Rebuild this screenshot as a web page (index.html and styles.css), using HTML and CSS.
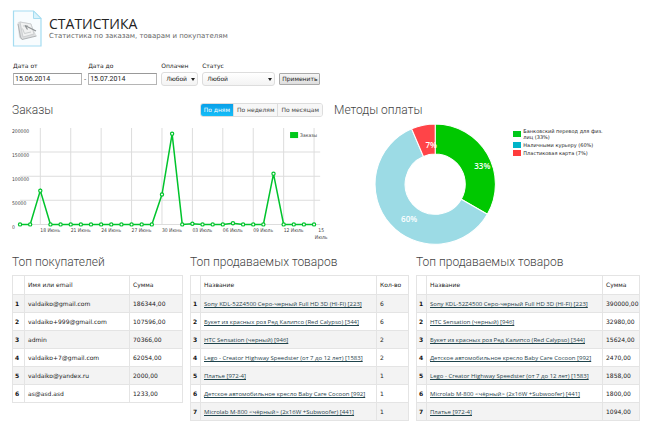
FILE: index.html
```html
<!DOCTYPE html>
<html lang="ru">
<head>
  <meta charset="UTF-8" />
  <meta name="viewport" content="width=device-width, initial-scale=1.0"/>
  <title>Статистика</title>
  <link rel="stylesheet" href="styles.css">
</head>
<body>
  <div class="container">
    <header class="header">
      <svg class="header-icon" width="30" height="37" viewBox="0 0 30 37" aria-hidden="true">
        <path d="M1.500 1H21.500L29 8.500V36H1.500Z" fill="#f8fcfe" stroke="#a5dcf1" stroke-width="1.200"/>
        <path d="M21.500 1V8.500H29Z" fill="#d9f2fb" stroke="#a5dcf1"/>
        <path d="M5.500 13Q6 11.500 8 11.500L19 13.500L24.500 26L10 29.500Q8 29 7 27Z" fill="#dcdedf"/>
        <path d="M8 12L19 14L22 24L11 27Z" fill="#f0f1f1" stroke="#c5c8ca" stroke-width="0.800"/>
        <path d="M6 14L8.500 27L10 29.500L24.500 26" fill="none" stroke="#a9adaf" stroke-width="0.900"/>
        <path d="M11 16L16 15.500M10.500 18.500L12.500 23.500L19 22" fill="none" stroke="#c4c7c8" stroke-width="0.900"/>
        <path d="M13 15.500L24 21M13 15.500L15.500 19.500" fill="none" stroke="#8f9395" stroke-width="1.200"/>
      </svg>
      <div>
        <h1>СТАТИСТИКА</h1>
        <p>Статистика по заказам, товарам и покупателям</p>
      </div>
    </header>

    <!-- Фильтр -->
    <form class="filter">
      <div class="field field-date">
        <label for="dateFrom">Дата от</label>
        <input type="text" id="dateFrom" value="15.06.2014" />
      </div>
      <span class="dash">-</span>
      <div class="field field-date">
        <label for="dateTo">Дата до</label>
        <input type="text" id="dateTo" value="15.07.2014" />
      </div>
      <div class="field field-paid">
        <label for="paid">Оплачен</label>
        <div class="select"><select id="paid"><option>Любой</option></select></div>
      </div>
      <div class="field field-status">
        <label for="status">Статус</label>
        <div class="select"><select id="status"><option>Любой</option></select></div>
      </div>
      <button type="button" class="apply">Применить</button>
    </form>

    <!-- Графики -->
    <div class="charts">
      <section>
        <div class="section-head">
          <h2>Заказы</h2>
          <div class="tabs">
            <button type="button" class="active">По дням</button>
            <button type="button">По неделям</button>
            <button type="button">По месяцам</button>
          </div>
        </div>
        <svg class="line-chart" viewBox="0 0 316 122" role="img" aria-label="Заказы">
          <g id="grid" class="grid"></g>
          <g id="axis" class="axis"></g>
          <rect x="277" y="8" width="8" height="6" fill="#00c81a"/>
          <text class="axis" x="287" y="13">Заказы</text>
          <polyline id="line" class="line"/>
          <g id="dots" class="dots"></g>
        </svg>
      </section>

      <section>
        <div class="section-head">
          <h2>Методы оплаты</h2>
        </div>
        <div class="payments">
          <svg class="donut" viewBox="-61 -61 122 122" role="img" aria-label="Методы оплаты">
            <path d="M0 -60A60 60 0 0 1 52 30L26 15A30 30 0 0 0 0 -30Z" fill="#00c800"/>
            <path d="M52 30A60 60 0 1 1 -23.500 -55.200L-11.700 -27.600A30 30 0 1 0 26 15Z" fill="#9cdbe5"/>
            <path d="M-23.500 -55.200A60 60 0 0 1 0 -60V-30A30 30 0 0 0 -11.700 -27.600Z" fill="#ff4448"/>
            <text x="47" y="-15">33%</text>
            <text x="-26" y="38">60%</text>
            <text x="-4" y="-36">7%</text>
          </svg>
          <ul class="legend">
            <li><i class="green"></i>Банковский перевод для физ. лиц (33%)</li>
            <li><i class="cyan"></i>Наличными курьеру (60%)</li>
            <li><i class="red"></i>Пластиковая карта (7%)</li>
          </ul>
        </div>
      </section>
    </div>

    <!-- Таблицы -->
    <div class="tables">
      <section>
        <h2>Топ покупателей</h2>
        <table>
          <colgroup><col class="col-num-wide"><col><col class="col-buyer-sum"></colgroup>
          <thead>
            <tr><th></th><th>Имя или email</th><th>Сумма</th></tr>
          </thead>
          <tbody>
            <tr><td>1</td><td>valdaiko@gmail.com</td><td>186344,00</td></tr>
            <tr><td>2</td><td>valdaiko+999@gmail.com</td><td>107596,00</td></tr>
            <tr><td>3</td><td>admin</td><td>70366,00</td></tr>
            <tr><td>4</td><td>valdaiko+7@gmail.com</td><td>62054,00</td></tr>
            <tr><td>5</td><td>valdaiko@yandex.ru</td><td>2000,00</td></tr>
            <tr><td>6</td><td>as@asd.asd</td><td>1233,00</td></tr>
          </tbody>
        </table>
      </section>

      <section>
        <h2>Топ продаваемых товаров</h2>
        <table>
          <colgroup><col class="col-num"><col><col class="col-count"></colgroup>
          <thead>
            <tr><th></th><th>Название</th><th>Кол-во</th></tr>
          </thead>
          <tbody>
            <tr><td>1</td><td><a href="#">Sony KDL-52Z4500 Серо-черный Full HD 3D (HI-FI) [223]</a></td><td>6</td></tr>
            <tr><td>2</td><td><a href="#">Букет из красных роз Ред Калипсо (Red Calypso) [344]</a></td><td>6</td></tr>
            <tr><td>3</td><td><a href="#">HTC Sensation (черный) [946]</a></td><td>2</td></tr>
            <tr><td>4</td><td><a href="#">Lego - Creator Highway Speedster (от 7 до 12 лет) [1583]</a></td><td>2</td></tr>
            <tr><td>5</td><td><a href="#">Платье [972-4]</a></td><td>1</td></tr>
            <tr><td>6</td><td><a href="#">Детское автомобильное кресло Baby Care Cocoon [992]</a></td><td>1</td></tr>
            <tr><td>7</td><td><a href="#">Microlab M-800 &lt;чёрный&gt; (2x16W +Subwoofer) [441]</a></td><td>1</td></tr>
          </tbody>
        </table>
      </section>

      <section>
        <h2>Топ продаваемых товаров</h2>
        <table>
          <colgroup><col class="col-num"><col><col class="col-sum"></colgroup>
          <thead>
            <tr><th></th><th>Название</th><th>Сумма</th></tr>
          </thead>
          <tbody>
            <tr><td>1</td><td><a href="#">Sony KDL-52Z4500 Серо-черный Full HD 3D (HI-FI) [223]</a></td><td>390000,00</td></tr>
            <tr><td>2</td><td><a href="#">HTC Sensation (черный) [946]</a></td><td>32980,00</td></tr>
            <tr><td>3</td><td><a href="#">Букет из красных роз Ред Калипсо (Red Calypso) [344]</a></td><td>15624,00</td></tr>
            <tr><td>4</td><td><a href="#">Детское автомобильное кресло Baby Care Cocoon [992]</a></td><td>2470,00</td></tr>
            <tr><td>5</td><td><a href="#">Lego - Creator Highway Speedster (от 7 до 12 лет) [1583]</a></td><td>1858,00</td></tr>
            <tr><td>6</td><td><a href="#">Microlab M-800 &lt;чёрный&gt; (2x16W +Subwoofer) [441]</a></td><td>1800,00</td></tr>
            <tr><td>7</td><td><a href="#">Платье [972-4]</a></td><td>1094,00</td></tr>
          </tbody>
        </table>
      </section>
    </div>
  </div>

  <script src="chart.js"></script>
</body>
</html>
```

FILE: styles.css
```css
* {
  box-sizing: border-box;
}

body {
  margin: 0;
  background-color: #fff;
  color: #222;
  font-family: "DejaVu Sans", sans-serif;
  font-size: 6px;
  line-height: 10px;
}

.container {
  padding: 10px 10px 10px 12px;
}

h1, h2, p, ul {
  margin: 0;
  padding: 0;
}

h1 {
  font-family: "Open Sans", sans-serif;
  font-size: 14px;
  font-weight: 400;
  line-height: 16px;
}

h2 {
  font-family: Roboto, sans-serif;
  font-size: 12px;
  font-weight: 300;
  line-height: 18px;
  color: #444;
}

input, select, button {
  font-family: inherit;
  font-size: 6px;
  line-height: 10px;
  color: #222;
  margin: 0;
}

.header {
  display: flex;
  gap: 7px;
}

.header > div {
  padding-top: 6px;
}

.header p {
  font-size: 7px;
  line-height: 8px;
  color: #666;
}

/* фильтр */
.filter {
  display: flex;
  align-items: flex-end;
  gap: 4px;
  margin-top: 14px;
  padding-left: 1px;
}

.field label {
  display: block;
  margin-bottom: 1px;
}

.field-date {
  width: 69px;
}

.field-date input {
  display: block;
  width: 100%;
  height: 12px;
  margin: 2px 0 1px;
  padding: 0 1px;
  border: 1px solid #b5b5b5;
  border-top-color: #999;
  font-family: Roboto, sans-serif;
  font-size: 7px;
}

.dash {
  margin: 0 -2px 2px;
}

.field-paid {
  width: 37px;
}

.field-status {
  width: 73px;
}

.select {
  position: relative;
}

.select::after {
  content: "";
  position: absolute;
  right: 3px;
  top: 6px;
  border: 2px solid transparent;
  border-top: 3px solid #222;
  border-bottom: 0;
  pointer-events: none;
}

.select select {
  display: block;
  appearance: none;
  width: 100%;
  height: 14px;
  padding: 0 4px;
  border: 1px solid #ddd;
  border-radius: 3px;
  background: linear-gradient(#fff, #f3f3f3);
}

.apply {
  height: 12px;
  margin-bottom: 1px;
  padding: 0 2px;
  border: 1px solid #aaa;
  border-radius: 1px;
  background: linear-gradient(#f6f6f6, #dedede);
}

/* графики */
.charts {
  display: grid;
  grid-template-columns: 311fr 306fr;
  gap: 11px;
  margin-top: 16px;
}

.section-head {
  display: flex;
  justify-content: space-between;
  align-items: center;
  height: 16px;
}

.tabs {
  display: flex;
  border: 1px solid #ddd;
  border-radius: 3px;
  overflow: hidden;
}

.tabs button {
  padding: 1px 3px;
  border: 0;
  border-left: 1px solid #ddd;
  background: #f7f7f7;
  color: #444;
}

.tabs button.active {
  border-left: 0;
  background: linear-gradient(#0a9fe8, #14bdf8);
  color: #fff;
}

.line-chart {
  display: block;
  width: 102%;
  margin-top: 6px;
}

.grid line {
  stroke: #ddd;
  stroke-width: 1;
}

.axis {
  font-family: "DejaVu Sans Condensed", "DejaVu Sans", sans-serif;
  font-size: 5px;
  fill: #444;
}

.line {
  fill: none;
  stroke: #00c42c;
  stroke-width: 1.500;
}

.dots circle {
  fill: #fff;
  stroke: #00c42c;
  stroke-width: 1.200;
}

.payments {
  display: flex;
  align-items: flex-start;
  gap: 17px;
  padding: 5px 0 0 40px;
}

.donut {
  flex: 0 0 46%;
}

.donut path {
  stroke: #fff;
  stroke-width: 1;
}

.donut text {
  fill: #fff;
  font-family: "Open Sans", sans-serif;
  font-size: 8px;
  font-weight: 600;
  text-anchor: middle;
}

.legend {
  list-style: none;
  max-width: 90px;
  padding-top: 5px;
  font-size: 5px;
  line-height: 6px;
}

.legend li {
  display: flex;
  align-items: center;
  gap: 2px;
  margin-bottom: 2px;
}

.legend i {
  flex: none;
  width: 8px;
  height: 6px;
}

.green {
  background: #00c81a;
}

.cyan {
  background: #00b4c8;
}

.red {
  background: #ff3c3c;
}

/* таблицы */
.tables {
  display: grid;
  grid-template-columns: 171fr 219fr 224fr;
  gap: 7px;
  margin-top: 7px;
}

table {
  width: 100%;
  margin-top: 4px;
  border-collapse: collapse;
  table-layout: fixed;
}

th, td {
  height: 18px;
  padding: 0 0 0 3px;
  border: 1px solid #e4e4e4;
  font-weight: 400;
  text-align: left;
  white-space: nowrap;
}

th {
  height: 19px;
}

td:first-child {
  padding: 0 0 0 2px;
  font-weight: 700;
  color: #111;
}

tbody tr:nth-child(odd) {
  background: #f3f3f3;
}

td a {
  font-family: "Open Sans", sans-serif;
  color: #1f444c;
}

.col-num {
  width: 10px;
}

.col-num-wide {
  width: 12px;
}

.col-buyer-sum {
  width: 53px;
}

.col-count {
  width: 32px;
}

.col-sum {
  width: 37px;
}
```

FILE: chart.js
```js
const values = [0, 0, 70000, 0, 0, 0, 0, 0, 0, 0, 0, 0, 0, 0, 62000, 188000, 0, 1200, 0, 0, 0, 2500, 0, 0, 0, 105000, 0, 0, 0, 0];
const days = ['18 Июнь', '21 Июнь', '24 Июнь', '27 Июнь', '30 Июнь', '03 Июль', '06 Июль', '09 Июль', '12 Июль'];
const left = 8;
const step = 10.1;
const bottom = 100;
const height = 96;

const x = i => left + i * step;
const y = v => bottom - v / 200000 * height;

let grid = '';
let axis = '';

for (let v = 0; v <= 200000; v += 50000) {
  if (v < 200000) grid += `<line x1="${left}" x2="307" y1="${y(v)}" y2="${y(v)}"/>`;
  axis += `<text x="0" y="${y(v) + 5}">${v}</text>`;
}

for (let i = 2; i < values.length; i += 3) {
  grid += `<line x1="${x(i)}" x2="${x(i)}" y1="${y(200000)}" y2="${bottom}"/>`;
}

days.forEach((day, n) => {
  axis += `<text x="${x(n * 3 + 2)}" y="108">${day}</text>`;
});
axis += '<text x="308" y="108" text-anchor="middle">15</text><text x="308" y="115" text-anchor="middle">Июль</text>';

document.getElementById('grid').innerHTML = grid;
document.getElementById('axis').innerHTML = axis;
document.getElementById('line').setAttribute('points', values.map((v, i) => `${x(i)},${y(v)}`).join(' '));
document.getElementById('dots').innerHTML = values.map((v, i) => `<circle cx="${x(i)}" cy="${y(v)}" r="1.6"/>`).join('');
```
